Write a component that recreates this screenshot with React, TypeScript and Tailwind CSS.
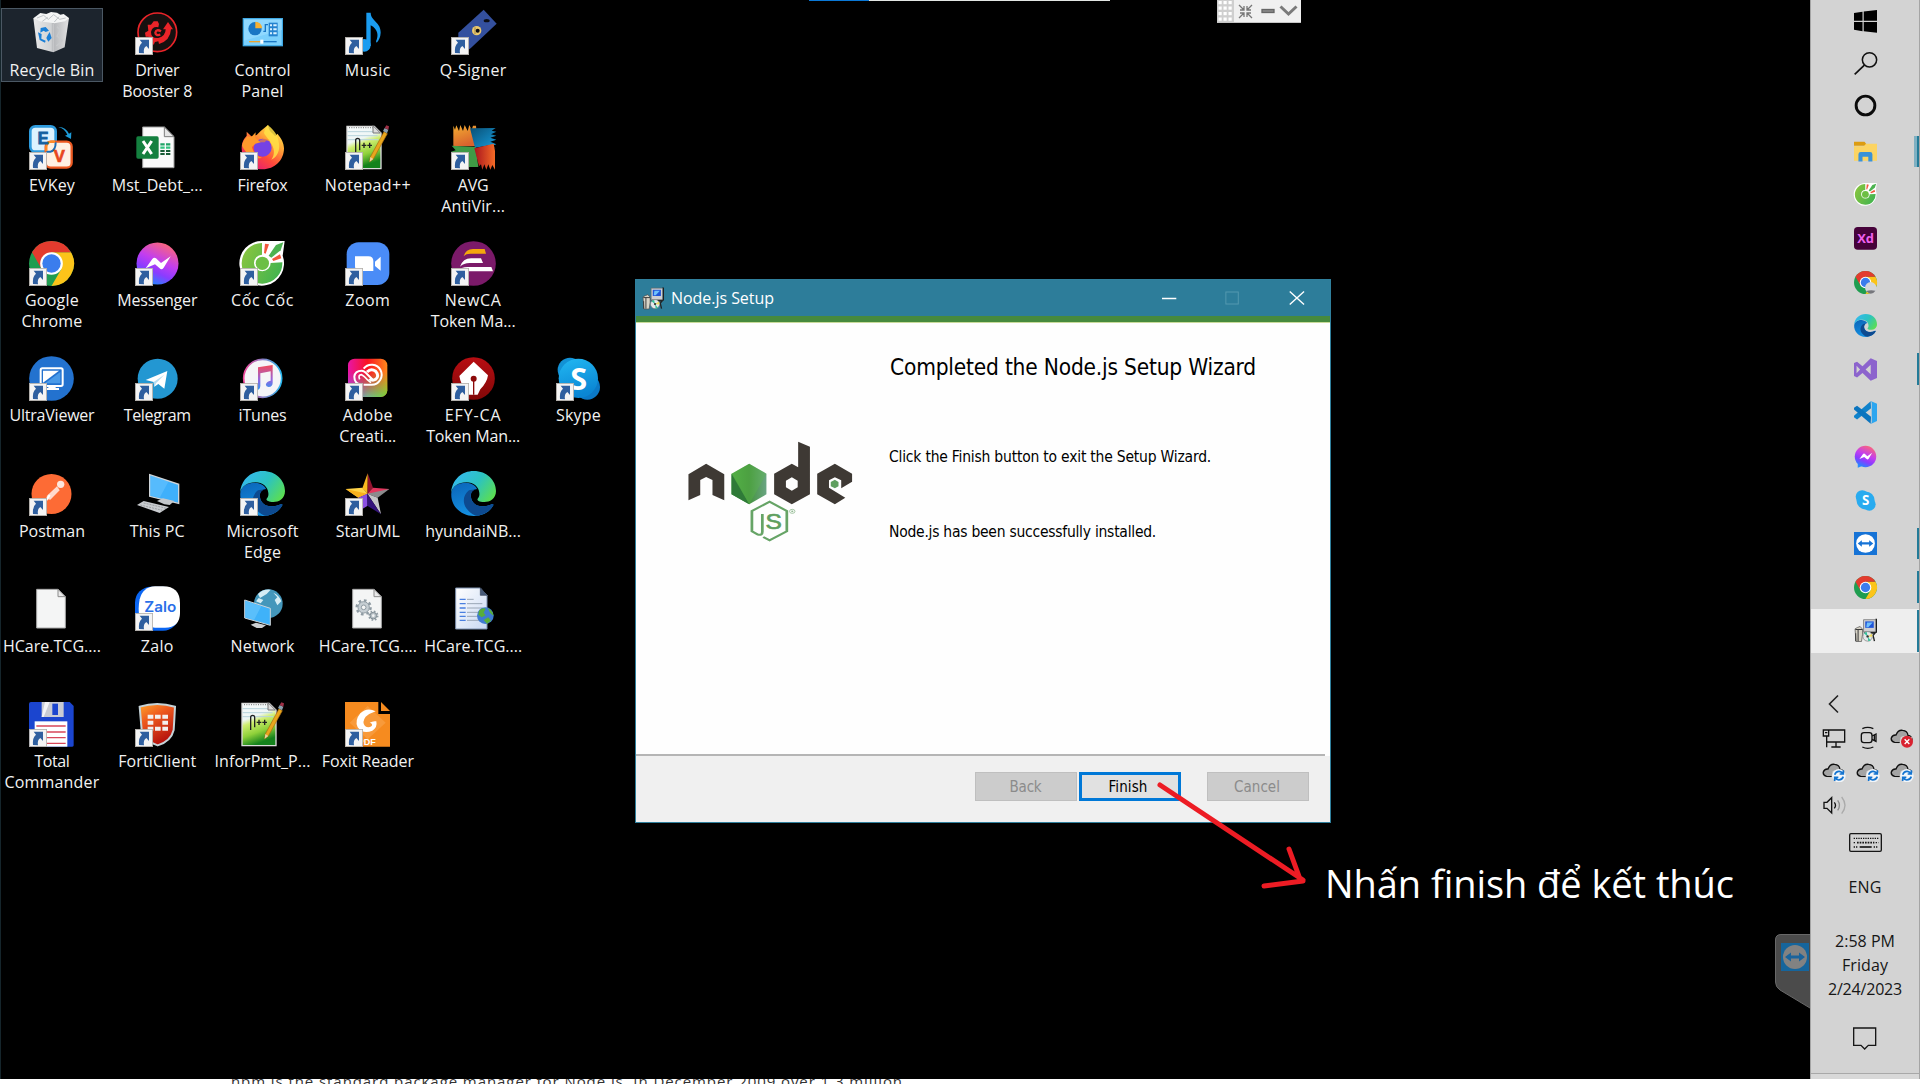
import { useLayoutEffect, useRef, useState, type ReactNode } from "react";

/* Text set to a given width by spreading or tightening its letters. */
function Fit({ w, children, className = "" }: { w: number; children: string; className?: string }) {
  const ref = useRef<HTMLSpanElement>(null);
  const [spacing, setSpacing] = useState(0);
  useLayoutEffect(() => {
    const el = ref.current;
    if (!el) return;
    const natural = el.getBoundingClientRect().width - spacing * children.length;
    setSpacing((w - natural) / children.length);
    // eslint-disable-next-line react-hooks/exhaustive-deps
  }, [w, children]);
  return (
    <span ref={ref} className={"inline-block whitespace-pre " + className} style={{ letterSpacing: spacing + "px" }}>
      {children}
    </span>
  );
}

function Svg({ children }: { children: ReactNode }) {
  return (
    <svg viewBox="0 0 135 135" className="block h-full w-full overflow-visible">
      {children}
    </svg>
  );
}

function Shortcut() {
  return (
    <svg viewBox="0 0 54 54" className="absolute bottom-0 left-0 h-[18px] w-[18px]">
      <rect x="1" y="1" width="52" height="52" fill="#f4f4f4" stroke="#b4b0ac" strokeWidth="3" />
      <path d="M12 48 Q10 25 21 17 L14 8 H42 V36 L34 27 Q24 33 27 49 Z" fill="#2f5f9f" />
    </svg>
  );
}

const RecycleBin = () => (
  <Svg>
    <defs>
      <linearGradient id="bin" x1="0" x2="1">
        <stop offset="0" stopColor="#e9e9e9" />
        <stop offset=".5" stopColor="#d0d2d4" />
        <stop offset=".55" stopColor="#b4b6b9" />
        <stop offset="1" stopColor="#e2e2e2" />
      </linearGradient>
    </defs>
    <path d="M13 24 L120 24 L107 112 L73 127 L24 114 Z" fill="url(#bin)" />
    <path d="M14 24 L34 9 L52 12 L66 6 L84 8 L94 14 L104 12 L120 24 L108 34 L76 40 L32 34 Z" fill="#f3f4f4" />
    <path d="M24 24 L44 16 L58 28 L74 14 L92 28 L110 24 M40 34 L56 22 M76 36 L90 20" fill="none" stroke="#bfc4c7" strokeWidth="3" />
    <path d="M73 42 V126" stroke="#c9cbcd" strokeWidth="3" />
    <path d="M84 50 L94 60 L84 78 L100 92 L82 108" fill="none" stroke="#c8cacc" strokeWidth="4" />
    <path d="M35 54 L50 51 L60 62 L50 66 L44 62 L34 68 Z M27 67 L38 72 L37 86 L50 92 L48 98 L32 90 Z M62 66 L68 84 L58 95 L52 84 L56 76 Z" fill="#1a7fd6" />
  </Svg>
);

const DriverBooster = () => (
  <Svg>
    <circle cx="67" cy="67" r="58" fill="#15100f" stroke="#ea2429" strokeWidth="5" />
    <path d="M38 44 L48 44 L56 34 H68 L72 42 L70 52 Q52 48 48 66 Q48 86 70 84 Q92 78 92 58 H84 L99 36 L114 58 H108 Q106 92 72 102 L70 94 L60 96 L56 104 L46 98 L48 88 L40 80 L32 80 L30 68 L40 62 Z" fill="#ea2429" />
    <path d="M78 64 Q64 56 61 68 Q62 78 76 74" fill="none" stroke="#ea2429" strokeWidth="7" />
  </Svg>
);

const ControlPanel = () => (
  <Svg>
    <rect x="10" y="26" width="117" height="81" fill="#7bd0fc" stroke="#3fa9e4" strokeWidth="4" />
    <path d="M12 28 H126 V60 L12 92Z" fill="#a3e0ff" opacity=".5" />
    <circle cx="45" cy="56" r="20" fill="#1976c4" />
    <path d="M46 55 V35 A20 20 0 0 1 66 55Z" fill="#f8b133" />
    <path d="M70 64 H76 V44 H84" fill="none" stroke="#1976c4" strokeWidth="4" />
    <rect x="86" y="38" width="27" height="41" fill="#2483cf" />
    <path d="M90 46 h6 M100 46 h10 M90 58 h6 M100 58 h10 M90 70 h6 M100 70 h10" stroke="#d8f1ff" strokeWidth="6" />
    <path d="M27 95 H60" stroke="#eba42c" strokeWidth="4" />
    <path d="M70 95 H110" stroke="#1976c4" strokeWidth="4" />
    <rect x="61" y="89" width="9" height="12" fill="#fff" />
  </Svg>
);

const Music = () => (
  <Svg>
    <ellipse cx="58" cy="106" rx="19" ry="19" fill="#1a9cf0" />
    <path d="M64 8 H77 C78 34 108 36 107 68 Q106 86 95 98 L93 94 C101 78 100 58 77 46 V108 H64Z" fill="#1a9cf0" />
  </Svg>
);

const QSigner = () => (
  <Svg>
    <path d="M98 -1 L137 41 L62 112 L55 118 L22 84 V68 Z" fill="#34509e" />
    <ellipse cx="107" cy="32" rx="9" ry="5" fill="#0c0d14" />
    <circle cx="77" cy="62" r="14" fill="#ecc96d" />
    <circle cx="80" cy="62" r="6" fill="#0c0d14" />
    <path d="M72 52 V72" stroke="#7a683a" strokeWidth="2" />
  </Svg>
);

const EVKey = () => (
  <Svg>
    <rect x="4" y="4" width="76" height="76" rx="15" fill="#dcf3ff" stroke="#2e9bdd" strokeWidth="8" />
    <path d="M88 6 Q106 10 115 29 L108 32 L126 42 L127 22 L120 26 Q108 4 88 6Z" fill="#1d9ad6" />
    <rect x="50" y="50" width="78" height="78" rx="15" fill="#fff0e2" stroke="#ee5a22" strokeWidth="7" />
    <path d="M52 80 H64 Q80 78 80 52" fill="none" stroke="#1d6db6" strokeWidth="6" />
    <path d="M52 78 V65 Q54 50 68 50 H78" fill="none" stroke="#ff8c26" strokeWidth="7" />
    <text x="26" y="58" fontFamily="Liberation Sans" fontWeight="700" fontSize="48" fill="#14619f" stroke="#14619f" strokeWidth="3">E</text>
    <text x="74" y="111" fontFamily="Liberation Sans" fontWeight="700" fontSize="50" fill="#e8461c" stroke="#e8461c" strokeWidth="2">V</text>
  </Svg>
);

const Excel = () => (
  <Svg>
    <path d="M23 6 H88 L117 35 V128 H23Z" fill="#fafafa" stroke="#9d9d9d" strokeWidth="3" />
    <path d="M88 6 V35 H117Z" fill="#e6e6e6" stroke="#7d7d7d" strokeWidth="3" />
    <path d="M76 58 h13 M93 58 h13" stroke="#21a366" strokeWidth="7" />
    <path d="M76 68 h13 M93 68 h13" stroke="#33c481" strokeWidth="7" />
    <path d="M76 78 h13 M93 78 h13 M76 87 h13 M93 87 h13" stroke="#185c37" strokeWidth="6" />
    <rect x="4" y="34" width="67" height="67" rx="5" fill="#14803f" />
    <path d="M24 48 L50 87 M50 48 L24 87" stroke="#fff" strokeWidth="9" />
  </Svg>
);

const Firefox = () => (
  <Svg>
    <defs>
      <linearGradient id="ff" x1=".9" y1="0" x2=".2" y2="1">
        <stop offset="0" stopColor="#fff44f" />
        <stop offset=".35" stopColor="#ffa436" />
        <stop offset=".65" stopColor="#ff4a3a" />
        <stop offset="1" stopColor="#e3147d" />
      </linearGradient>
    </defs>
    <path d="M84 0 C86 20 98 24 106 34 L112 26 C124 40 132 54 132 70 C132 106 104 133 68 133 C30 133 4 106 5 68 C6 48 12 42 20 32 L20 20 L34 34 L50 30 L62 18 Z" fill="url(#ff)" />
    <path d="M84 0 C92 8 114 26 116 50 C122 74 112 96 94 104 C104 92 104 74 96 60 C86 40 76 34 72 24 C74 12 80 6 84 0Z" fill="#ffe146" opacity=".85" />
    <circle cx="68" cy="68" r="27" fill="#7542e5" />
    <path d="M6 62 C10 44 16 42 22 34 L34 36 L47 22 L46 38 L62 52 L46 56 L36 66 C40 84 52 96 66 98 C40 104 22 92 6 62Z" fill="#ff9a2c" />
    <path d="M54 52 Q68 34 90 46 Q78 44 74 52 Z" fill="#ff8b1d" opacity=".6" />
  </Svg>
);

const Notepad = () => (
  <Svg>
    <defs>
      <linearGradient id="npp" x1="0" y1="0" x2=".3" y2="1">
        <stop offset="0" stopColor="#f8fbfc" />
        <stop offset=".38" stopColor="#eef6f5" />
        <stop offset=".5" stopColor="#cfee70" />
        <stop offset=".75" stopColor="#8fd13a" />
        <stop offset="1" stopColor="#14821c" />
      </linearGradient>
    </defs>
    <path d="M6 4 H88 L108 24 V131 H6Z" fill="url(#npp)" stroke="#dcdcdc" strokeWidth="4" />
    <path d="M12 8 H84" stroke="#8a8a8a" strokeWidth="4" strokeDasharray="3 4" />
    <path d="M8 20 H84 M8 32 H98 M8 44 H100" stroke="#b7d3dc" strokeWidth="3" />
    <path d="M84 2 V24 H106Z" fill="#dcdcdc" stroke="#777" strokeWidth="3" />
    <path d="M32 84 V46 Q32 40 38 40 Q44 40 44 46 V76" fill="none" stroke="#222" strokeWidth="4" />
    <path d="M50 61 h14 M57 53 v16 M67 61 h14 M74 53 v16" stroke="#222" strokeWidth="4" />
    <path d="M74 110 L76 96 L117 20 L127 26 L85 102Z" fill="#e9a61d" stroke="#a76b10" strokeWidth="2" />
    <path d="M114 18 L119 9 L130 14 L126 25Z" fill="#8ca0ad" />
    <path d="M119 9 L124 1 L132 4 L130 14Z" fill="#9d2f45" />
    <path d="M74 110 L76 96 L85 102Z" fill="#ebd09d" />
  </Svg>
);

const Avg = () => (
  <Svg>
    <defs>
      <linearGradient id="avgo" x1="0" y1="0" x2=".4" y2="1"><stop offset="0" stopColor="#f3ad30" /><stop offset="1" stopColor="#d9632e" /></linearGradient>
      <linearGradient id="avgb" x1="0" y1="0" x2="1" y2="1"><stop offset="0" stopColor="#0a4f75" /><stop offset="1" stopColor="#169ddc" /></linearGradient>
      <linearGradient id="avgr" x1="0" y1="0" x2="1" y2="0"><stop offset="0" stopColor="#a8131e" /><stop offset="1" stopColor="#f46a26" /></linearGradient>
    </defs>
    <path d="M7 2 L12 14 L16 1 L24 18 L28 0 L36 18 L41 0 L50 18 L55 0 L62 14 L66 2 L75 2 L76 14 L74 64 H7Z" fill="url(#avgo)" />
    <path d="M57 10 L134 9 L122 17 L136 20 L120 28 L136 32 L118 38 L136 44 L118 50 L136 58 L124 62 L136 72 L120 60 L72 68Z" fill="url(#avgb)" />
    <path d="M2 62 L74 66 L82 126 H54 L10 100 L0 96 L12 88 L0 80 L14 76Z" fill="#3f9a46" />
    <path d="M70 70 L128 56 L132 78 V134 L124 120 L118 134 L112 118 L106 134 L100 118 L94 134 L90 118 L84 124Z" fill="url(#avgr)" />
  </Svg>
);

const Chrome = () => (
  <Svg>
    <circle cx="67.500" cy="67.500" r="67.500" fill="#1f9d50" />
    <path d="M126 33.750 A67.500 67.500 0 0 1 67.500 135 L96.700 84.400 L67.500 33.750Z" fill="#fcc41a" />
    <path d="M67.500 33.750 H126 A67.500 67.500 0 0 0 9 33.750 L38.300 84.400Z" fill="#e33b2e" />
    <circle cx="67.500" cy="67.500" r="34" fill="#fff" />
    <circle cx="67.500" cy="67.500" r="27.500" fill="#3b7ded" />
  </Svg>
);

const Messenger = ({ tail = false }: { tail?: boolean }) => (
  <Svg>
    <defs>
      <linearGradient id="msg" x1=".75" y1="0" x2=".3" y2="1">
        <stop offset="0" stopColor="#ff6a72" />
        <stop offset=".45" stopColor="#c23df0" />
        <stop offset=".7" stopColor="#8a3cff" />
        <stop offset="1" stopColor="#1a8dff" />
      </linearGradient>
    </defs>
    {tail && <path d="M22 90 V134 L64 118Z" fill="#2b8cff" />}
    <circle cx="67.500" cy="67.500" r="63" fill="url(#msg)" />
    <path d="M32 82 L52 54 Q57 48 63 52 L78 66 L107 46 L86 80 Q80 88 74 82 L60 70 Z" fill="#fff" />
  </Svg>
);

const CocCoc = () => (
  <Svg>
    <defs>
      <linearGradient id="coc" x1="0" y1=".3" x2="1" y2=".8">
        <stop offset="0" stopColor="#86c440" />
        <stop offset="1" stopColor="#3fb34f" />
      </linearGradient>
    </defs>
    <path d="M67 0 H134 L128 44 A67 67 0 1 1 67 0Z" fill="#fff" />
    <path d="M66 6 A61 61 0 1 0 127 64 L92 66 A25 25 0 1 1 66 41Z" fill="url(#coc)" />
    <circle cx="67" cy="67" r="20" fill="#6cbf44" />
    <path d="M75 8 L87 10 L77 38 L72 36Z M96 54 L120 40 L124 52 L100 60Z" fill="#f2593c" />
    <path d="M86 44 L108 12 L130 4 L122 28 L94 50Z" fill="#4cb350" />
  </Svg>
);

const Zoom = () => (
  <Svg>
    <rect x="5" y="4" width="128" height="128" rx="36" fill="#4a8cf7" />
    <path d="M30 46 H70 Q85 46 85 60 V90 H44 Q30 90 30 76Z M90 62 L107 47 V89 L90 75Z" fill="#fff" />
  </Svg>
);

const NewCA = () => (
  <Svg>
    <circle cx="67.500" cy="67.500" r="67" fill="#7b1a69" />
    <path d="M38 46 Q44 24 66 24 H101 L105 38 H58 Q44 38 38 46Z" fill="#f4a70d" />
    <path d="M27 77 Q36 52 60 52 H90 L96 66 H56 Q38 66 27 77Z M20 91 Q30 78 50 78 H121 L126 91Z" fill="#fff" />
  </Svg>
);

const UltraViewer = () => (
  <Svg>
    <circle cx="67.500" cy="67.500" r="67" fill="#2372cf" />
    <rect x="35" y="37" width="66" height="53" rx="5" fill="none" stroke="#fff" strokeWidth="6" />
    <path d="M42 44 H90 L42 80Z" fill="#fff" />
    <path d="M94 48 V82 H48Z" fill="#4a9ae8" />
    <path d="M58 92 H80 V96 H90 V102 H48 V96 H58Z" fill="#fff" />
  </Svg>
);

const Telegram = () => (
  <Svg>
    <circle cx="68" cy="68" r="60" fill="#2397d2" />
    <path d="M32 72 L97 45 L88 98 L70 84 L58 92 L56 78Z" fill="#fff" />
    <path d="M56 78 L88 56 L63 82 L58 92Z" fill="#b5dcf0" />
  </Svg>
);

const ITunes = () => (
  <Svg>
    <defs>
      <linearGradient id="itr" x1="0" x2="1"><stop offset="0" stopColor="#f1489b" /><stop offset="1" stopColor="#27b7ee" /></linearGradient>
      <linearGradient id="itn" x1="0" y1="0" x2="0" y2="1"><stop offset="0" stopColor="#f34a58" /><stop offset=".6" stopColor="#9266e0" /><stop offset="1" stopColor="#2a9af0" /></linearGradient>
    </defs>
    <circle cx="68" cy="67" r="57" fill="#f5f5f7" stroke="url(#itr)" strokeWidth="5" />
    <path d="M54 34 L98 27 V80 Q98 92 86 93 Q76 92 78 84 Q80 76 92 74 V46 L61 52 V90 Q60 102 50 102 Q40 100 42 91 Q44 82 54 81Z" fill="url(#itn)" />
  </Svg>
);

const CreativeCloud = () => (
  <Svg>
    <defs>
      <linearGradient id="cc1" x1="0" x2="1"><stop offset="0" stopColor="#e815a8" /><stop offset=".5" stopColor="#fa1420" /><stop offset="1" stopColor="#ff8a1c" /></linearGradient>
      <linearGradient id="cc2" x1="0" x2="1"><stop offset="0" stopColor="#8a5cf0" /><stop offset=".5" stopColor="#62cfa0" /><stop offset="1" stopColor="#5ee03c" /></linearGradient>
      <linearGradient id="ccm" x1="0" y1="0" x2="0" y2="1"><stop offset=".35" stopColor="#000" /><stop offset="1" stopColor="#fff" /></linearGradient>
      <mask id="ccmask"><rect width="135" height="135" fill="url(#ccm)" /></mask>
    </defs>
    <rect x="9" y="8" width="118" height="115" rx="20" fill="url(#cc1)" />
    <rect x="9" y="8" width="118" height="115" rx="20" fill="url(#cc2)" mask="url(#ccmask)" />
    <path d="M50 86 Q28 84 28 62 Q30 44 50 44 Q58 44 66 54 L84 72 M56 86 H80 A30 30 0 1 0 56 38" fill="none" stroke="#fff" strokeWidth="6" />
    <path d="M66 48 Q78 36 92 46 Q104 60 92 70 Q82 76 74 68" fill="none" stroke="#fff" strokeWidth="9" />
    <path d="M44 70 Q38 56 50 56 Q58 60 66 70 L78 80" fill="none" stroke="#fff" strokeWidth="5" />
  </Svg>
);

const Efy = () => (
  <Svg>
    <defs><linearGradient id="efy" x1="0" y1="0" x2="0" y2="1"><stop offset="0" stopColor="#b80d12" /><stop offset="1" stopColor="#820808" /></linearGradient></defs>
    <circle cx="67.500" cy="67.500" r="64" fill="url(#efy)" />
    <path d="M68 17 L111 58 Q108 80 88 100 L80 116 H48 Q28 80 25 60Z" fill="#fff" />
    <circle cx="68" cy="68" r="9" fill="#8c0a0a" />
    <path d="M68 72 V116" stroke="#8c0a0a" strokeWidth="4" />
  </Svg>
);

const Skype = () => (
  <Svg>
    <defs><linearGradient id="sky" x1="0" y1="0" x2=".3" y2="1"><stop offset="0" stopColor="#22b8f2" /><stop offset="1" stopColor="#0a86d4" /></linearGradient></defs>
    <circle cx="42" cy="42" r="37" fill="#1291d5" />
    <circle cx="94" cy="93" r="38" fill="#0b79c7" />
    <circle cx="67" cy="67" r="59" fill="url(#sky)" />
    <text x="68" y="101" textAnchor="middle" fontFamily="Open Sans" fontWeight="700" fontSize="92" fill="#fff">S</text>
  </Svg>
);

const Postman = () => (
  <Svg>
    <circle cx="67.500" cy="69" r="60" fill="#fd6b35" />
    <path d="M84 46 L54 74 L52 84 L64 86 L92 58 Z" fill="#ffd9cc" />
    <circle cx="95" cy="40" r="11" fill="#fde6de" />
    <path d="M62 72 L52 88" stroke="#fff" strokeWidth="6" />
  </Svg>
);

const ThisPC = () => (
  <Svg>
    <path d="M44 11 L131 40 V97 L44 76Z" fill="#3fb0fb" stroke="#cfd4d8" strokeWidth="4" />
    <path d="M46 13 L100 32 L74 80 L46 73Z" fill="#74c9ff" opacity=".45" />
    <path d="M66 90 L84 82 L118 90 L104 102 L88 100Z" fill="#c4c8cc" />
    <path d="M6 102 L26 90 L102 108 L74 126Z" fill="#c9ccd0" />
    <path d="M16 102 L82 118 M26 96 L94 112" stroke="#85898d" strokeWidth="2" strokeDasharray="6 3" />
  </Svg>
);

const Edge = () => (
  <Svg>
    <defs>
      <linearGradient id="edgeTop" x1="0" y1=".3" x2="1" y2=".8"><stop offset="0" stopColor="#35b9ee" /><stop offset=".5" stopColor="#2cc3c0" /><stop offset="1" stopColor="#5fe04a" /></linearGradient>
      <linearGradient id="edgeLeft" x1="0" y1="0" x2=".4" y2="1"><stop offset="0" stopColor="#0a64b8" /><stop offset="1" stopColor="#1591e2" /></linearGradient>
    </defs>
    <path d="M1 66 C4 44 24 34 46 35 C64 36 76 46 78 54 C62 54 56 70 62 86 C70 106 96 112 124 99 Q128 99 127 103 C116 124 94 135 68 135 C30 135 -2 104 1 66Z" fill="url(#edgeLeft)" />
    <path d="M54 58 C36 72 34 94 46 112 C56 126 70 135 80 134 C102 130 118 120 127 103 Q128 99 124 99 C96 112 70 106 62 88 C56 72 60 58 78 54 Z" fill="#0d4a90" />
    <path d="M0 66 C3 25 33 0 68 0 C108 0 135 28 135 60 C135 84 116 93 100 93 C84 93 77 87 80 83 C84 78 86 74 85 66 C84 48 68 34 46 34 C24 34 4 46 0 66Z" fill="url(#edgeTop)" />
  </Svg>
);

const StarUML = () => (
  <Svg>
    <path d="M68 7 L84 50 L67 68Z" fill="#93132f" />
    <path d="M68 7 L52 52 L67 68Z" fill="#f8b91f" />
    <path d="M133 54 L84 50 L67 68 L92 74Z" fill="#e3365d" />
    <path d="M2 54 L52 50 L67 68 L40 80Z" fill="#ffd348" />
    <path d="M2 54 L40 80 L67 68Z" fill="#f8b01c" />
    <path d="M133 54 L98 80 L67 68Z" fill="#8b8b8d" />
    <path d="M98 80 L108 130 L67 68Z" fill="#c6c6c8" />
    <path d="M67 68 L40 80 L26 130 L68 104Z" fill="#8a4fe0" />
    <path d="M67 68 V104 L108 130Z" fill="#34137a" />
  </Svg>
);

const BlankFile = ({ children }: { children?: ReactNode }) => (
  <Svg>
    <path d="M23 10 H87 L109 32 V126 H23Z" fill="#f4f5f5" stroke="#a9a9a9" strokeWidth="3" />
    <path d="M87 10 V32 H109Z" fill="#e9e9e9" stroke="#8b8b8b" strokeWidth="3" />
    {children}
  </Svg>
);

const ConfigFile = () => (
  <BlankFile>
    <circle cx="56" cy="64" r="17" fill="#c6ced3" stroke="#8f9ba3" strokeWidth="3" />
    <circle cx="56" cy="64" r="21" fill="none" stroke="#8f9ba3" strokeWidth="7" strokeDasharray="8 8.500" />
    <circle cx="56" cy="64" r="7" fill="#f4f5f5" stroke="#8f9ba3" strokeWidth="3" />
    <circle cx="85" cy="89" r="10" fill="#b6bfc5" stroke="#7f8b92" strokeWidth="3" />
    <circle cx="85" cy="89" r="13" fill="none" stroke="#8f9ba3" strokeWidth="5" strokeDasharray="5 5.200" />
    <circle cx="85" cy="89" r="4" fill="#f4f5f5" />
  </BlankFile>
);

const WebFile = () => (
  <Svg>
    <defs><linearGradient id="wf" x1="0" y1="0" x2="1" y2="1"><stop offset="0" stopColor="#fff" /><stop offset="1" stopColor="#c8d8f2" /></linearGradient></defs>
    <path d="M14 6 H88 L108 28 V129 H14Z" fill="url(#wf)" stroke="#7d90ae" strokeWidth="3" />
    <path d="M88 6 V28 H108Z" fill="#475a78" stroke="#33425a" strokeWidth="2" />
    <path d="M26 40 h18 M26 53 h18 M26 66 h18 M26 79 h18 M26 91 h18 M26 103 h18" stroke="#4a7fe0" strokeWidth="4" />
    <path d="M48 40 h20 M48 53 h46 M48 66 h46 M48 79 h36 M48 91 h32 M48 103 h36" stroke="#9aa6b6" strokeWidth="3" />
    <circle cx="103" cy="89" r="25" fill="#3f7bd0" />
    <path d="M84 74 Q94 64 104 68 L98 80 L104 88 L92 94 L82 86Z M110 66 Q126 74 128 90 L118 82Z M98 102 L112 94 L120 104 L108 113Z" fill="#58ae3a" />
  </Svg>
);

const Zalo = () => (
  <Svg>
    <rect x="0" y="2" width="132" height="132" rx="48" fill="#0b66f2" />
    <path d="M60 1 H84 Q135 1 135 52 V80 Q135 124 90 125 H60 Q24 122 14 96 Q8 70 14 40 Q24 2 60 1Z" fill="#fff" />
    <text x="28" y="79" fontFamily="Inter" fontWeight="600" fontSize="44" textLength="96" lengthAdjust="spacingAndGlyphs" fill="#2a6fe8">Zalo</text>
  </Svg>
);

const Network = () => (
  <Svg>
    <circle cx="85" cy="53" r="43" fill="#4497bb" />
    <path d="M54 24 Q70 8 92 11 L80 24 L60 36Z M100 20 Q118 28 124 46 L112 58 L104 42 L112 34Z M56 36 L70 42 L62 52 L48 46Z" fill="#d5edf4" />
    <path d="M14 42 L91 67 V118 L14 96Z" fill="#3fb2f9" stroke="#cdd4d8" strokeWidth="3" />
    <path d="M16 45 L64 60 L42 102 L16 94Z" fill="#85d2ff" opacity=".4" />
    <path d="M32 116 L48 110 L78 118 L66 126 H50Z" fill="#cdd0d3" />
  </Svg>
);

const TotalCommander = () => (
  <Svg>
    <path d="M6 0 H122 L134 12 V130 Q134 134 130 134 H6 Q0 134 0 128 V6 Q0 0 6 0Z" fill="#1b45cf" />
    <rect x="38" y="0" width="66" height="45" fill="#c9cbd3" />
    <rect x="70" y="5" width="17" height="34" fill="#1b45cf" />
    <path d="M48 0 H62 L44 45 H38Z" fill="#f4f4f6" />
    <rect x="17" y="58" width="98" height="76" fill="#fff" />
    <path d="M22 72 H110 M22 90 H110 M22 107 H110 M22 124 H110" stroke="#d8475a" strokeWidth="4" />
  </Svg>
);

const FortiClient = () => (
  <Svg>
    <defs><linearGradient id="forti" x1="0" y1="0" x2=".5" y2="1"><stop offset="0" stopColor="#ffa32b" /><stop offset=".4" stopColor="#ee5a1e" /><stop offset="1" stopColor="#b5120d" /></linearGradient></defs>
    <path d="M14 14 Q66 -2 120 14 Q118 54 116 84 Q108 118 68 130 Q30 118 20 84Z" fill="url(#forti)" stroke="#c5d3d8" strokeWidth="6" />
    <path d="M38 38 h17 v12 h-17z M60 38 h17 v12 h-17z M82 38 h17 v12 h-17z M38 56 h17 v12 h-17z M82 56 h17 v12 h-17z M38 74 h17 v12 h-17z M60 74 h17 v12 h-17z M82 74 h17 v12 h-17z" fill="#f3efee" />
  </Svg>
);

const Foxit = () => (
  <Svg>
    <path d="M0 0 H100 V36 H135 V134 H0Z" fill="#f68b1f" />
    <path d="M108 0 L135 27 H108Z" fill="#f68b1f" />
    <path d="M68 12 L122 62 L68 112 L14 62Z" fill="#fbae5c" opacity=".45" />
    <path d="M92 28 Q66 14 46 34 Q28 56 38 76 Q54 98 82 86 Q98 76 94 58 Q84 56 74 62 Q84 64 80 72 Q70 80 60 72 Q50 60 62 44 Q74 34 92 28Z" fill="#fff" />
    <text x="38" y="128" fontFamily="Liberation Sans" fontWeight="700" fontSize="27" fill="#fff">PDF</text>
  </Svg>
);

type Item = { icon: ReactNode; lines: [string, number][]; link?: boolean; selected?: boolean } | null;

const HCARE: [string, number] = ["HCare.TCG....", 98];

const items: Item[] = [
  { icon: <RecycleBin />, lines: [["Recycle Bin", 85]], selected: true },
  { icon: <DriverBooster />, lines: [["Driver", 44], ["Booster 8", 70]], link: true },
  { icon: <ControlPanel />, lines: [["Control", 56], ["Panel", 42]] },
  { icon: <Music />, lines: [["Music", 46]], link: true },
  { icon: <QSigner />, lines: [["Q-Signer", 67]], link: true },
  null,
  { icon: <EVKey />, lines: [["EVKey", 46]], link: true },
  { icon: <Excel />, lines: [["Mst_Debt_...", 91]] },
  { icon: <Firefox />, lines: [["Firefox", 50]], link: true },
  { icon: <Notepad />, lines: [["Notepad++", 86]], link: true },
  { icon: <Avg />, lines: [["AVG", 31], ["AntiVir...", 64]], link: true },
  null,
  { icon: <Chrome />, lines: [["Google", 54], ["Chrome", 61]], link: true },
  { icon: <Messenger />, lines: [["Messenger", 80]], link: true },
  { icon: <CocCoc />, lines: [["Cốc Cốc", 63]], link: true },
  { icon: <Zoom />, lines: [["Zoom", 45]], link: true },
  { icon: <NewCA />, lines: [["NewCA", 57], ["Token Ma...", 85]], link: true },
  null,
  { icon: <UltraViewer />, lines: [["UltraViewer", 85]], link: true },
  { icon: <Telegram />, lines: [["Telegram", 67]], link: true },
  { icon: <ITunes />, lines: [["iTunes", 48]], link: true },
  { icon: <CreativeCloud />, lines: [["Adobe", 50], ["Creati...", 57]], link: true },
  { icon: <Efy />, lines: [["EFY-CA", 57], ["Token Man...", 94]], link: true },
  { icon: <Skype />, lines: [["Skype", 45]], link: true },
  { icon: <Postman />, lines: [["Postman", 66]], link: true },
  { icon: <ThisPC />, lines: [["This PC", 55]] },
  { icon: <Edge />, lines: [["Microsoft", 72], ["Edge", 37]], link: true },
  { icon: <StarUML />, lines: [["StarUML", 64]], link: true },
  { icon: <Edge />, lines: [["hyundaiNB...", 96]] },
  null,
  { icon: <BlankFile />, lines: [HCARE] },
  { icon: <Zalo />, lines: [["Zalo", 33]], link: true },
  { icon: <Network />, lines: [["Network", 64]] },
  { icon: <ConfigFile />, lines: [HCARE] },
  { icon: <WebFile />, lines: [HCARE] },
  null,
  { icon: <TotalCommander />, lines: [["Total", 35], ["Commander", 95]], link: true },
  { icon: <FortiClient />, lines: [["FortiClient", 78]], link: true },
  { icon: <Notepad />, lines: [["InforPmt_P...", 96]] },
  { icon: <Foxit />, lines: [["Foxit Reader", 92]], link: true },
];

function DesktopIcon({ item }: { item: Item }) {
  if (!item) return <div />;
  return (
    <div className="relative flex flex-col items-center">
      {item.selected && <div className="absolute top-[-2px] left-[2px] h-[74px] w-[102px] border border-[#4b5864] bg-[#1c242d]" />}
      <div className="relative h-[45px] w-[45px]">
        {item.icon}
        {item.link && <Shortcut />}
      </div>
      <div className="relative mt-[4.600px] flex flex-col items-center text-[16px] leading-[21px] text-[#f2f2f2]">
        {item.lines.map(([t, w]) => (
          <Fit key={t} w={w}>{t}</Fit>
        ))}
      </div>
    </div>
  );
}

const Installer = () => (
  <Svg>
    <path d="M56 4 H126 V78 H56Z" fill="#cfcfd2" stroke="#666" strokeWidth="4" />
    <path d="M126 2 H132 V78 H60" fill="none" stroke="#1c1c1c" strokeWidth="6" />
    <path d="M66 14 H116 V52 H66Z" fill="#1f55d8" />
    <path d="M76 20 H110 L84 48 H72Z" fill="#6fc0fc" />
    <path d="M6 58 L20 50 L36 44 L50 60 V90 L44 132 H12Z" fill="#d9d5c8" stroke="#4a4a4a" strokeWidth="4" />
    <path d="M24 62 V130 M8 62 H50 M10 84 V130" stroke="#3a3a3a" strokeWidth="6" />
    <path d="M98 82 H124 L112 96 L120 130" stroke="#222" strokeWidth="8" fill="none" />
    <circle cx="80" cy="102" r="28" fill="#e4e8ea" stroke="#777" strokeWidth="4" />
    <path d="M80 102 L58 84 L74 75Z M80 102 L98 126 L84 130Z" fill="#35c29b" />
    <path d="M80 102 L104 86 L108 104Z" fill="#f0dc5c" />
    <circle cx="80" cy="102" r="7" fill="#333" />
  </Svg>
);

const TeamViewer = () => (
  <Svg>
    <rect width="135" height="135" fill="#1673d6" />
    <circle cx="67.500" cy="67.500" r="55" fill="#fff" />
    <path d="M22 67 L46 48 V60 H89 V48 L113 67 L89 86 V74 H46 V86Z" fill="#1673d6" />
  </Svg>
);

const WindowsLogo = () => (
  <Svg>
    <path d="M0 18 L50 10 V63 H0Z M57 9 L135 0 V63 H57Z M0 70 H50 V124 L0 116Z M57 70 H135 V134 L57 125Z" fill="#000" />
  </Svg>
);
const Search = () => (
  <Svg><circle cx="91" cy="46" r="42" fill="none" stroke="#111" strokeWidth="9" /><path d="M61 77 L4 131" stroke="#111" strokeWidth="10" /></Svg>
);
const Cortana = () => <Svg><circle cx="67.500" cy="67.500" r="55" fill="none" stroke="#0b0b0b" strokeWidth="17" /></Svg>;
const Folder = () => (
  <Svg>
    <path d="M0 10 H62 L72 24 V34 H0Z" fill="#dd9c10" />
    <path d="M0 36 H58 L70 22 H135 V122 H0Z" fill="#fcd462" />
    <path d="M26 126 V84 Q26 70 40 70 H94 Q108 70 108 84 V126 H84 V98 H50 V126Z" fill="#3a92d8" />
  </Svg>
);
const Xd = () => (
  <Svg>
    <rect width="135" height="133" rx="22" fill="#46023a" />
    <text x="68" y="93" textAnchor="middle" fontFamily="Open Sans" fontWeight="700" fontSize="76" fill="#f061ee">Xd</text>
  </Svg>
);
const ChromeUser = () => (
  <Svg>
    <Chrome />
    <circle cx="98" cy="98" r="33" fill="#d5d7dc" />
    <path d="M72 118 Q98 108 126 116 Q116 132 98 133 Q82 132 72 118Z" fill="#76777c" />
  </Svg>
);
const VisualStudio = () => (
  <Svg>
    <path fillRule="evenodd" d="M98 2 L135 18 V117 L98 133 L50 88 L18 114 L0 106 V30 L18 22 L50 48 Z M98 40 L68 67 L98 96Z M15 46 V90 L36 68Z" fill="#8c63cd" />
  </Svg>
);
const VsCode = () => (
  <Svg>
    <path d="M98 2 L100 42 L18 108 L0 96 V86 L98 2Z" fill="#0f82cb" />
    <path d="M98 133 L100 93 L18 28 L0 40 V50 L98 133Z" fill="#0b74be" />
    <path d="M98 0 L135 16 V118 L98 135 Q104 130 104 122 V14 Q104 6 98 0Z" fill="#2ca6f0" />
  </Svg>
);
const SkypeSmall = () => (
  <Svg>
    <circle cx="48" cy="45" r="38" fill="#29abef" />
    <circle cx="90" cy="90" r="37" fill="#29abef" />
    <circle cx="68" cy="67" r="53" fill="#29abef" />
    <text x="68" y="95" textAnchor="middle" fontFamily="Open Sans" fontWeight="700" fontSize="78" fill="#fff">S</text>
  </Svg>
);

const apps: { icon: ReactNode; open?: boolean; active?: boolean; stacked?: boolean }[] = [
  { icon: <Folder />, open: true, stacked: true },
  { icon: <CocCoc /> },
  { icon: <Xd /> },
  { icon: <ChromeUser /> },
  { icon: <Edge /> },
  { icon: <VisualStudio />, open: true },
  { icon: <VsCode /> },
  { icon: <Messenger tail /> },
  { icon: <SkypeSmall /> },
  { icon: <TeamViewer />, open: true },
  { icon: <Chrome />, open: true },
  { icon: <Installer />, open: true, active: true },
];

const Cloud = ({ error = false }: { error?: boolean }) => (
  <svg viewBox="0 0 72 60" className="h-5 w-6">
    <path d="M14 43 Q2 40 4 30 Q7 20 18 21 Q24 5 38 7 Q52 8 54 22 Q66 24 66 36 L60 44Z" fill="#a4a4a4" stroke="#111" strokeWidth="4" />
    <path d="M32 28 Q42 20 66 28 V50 H28Z" fill="#d9d9d9" />
    {error ? (
      <>
        <circle cx="51" cy="41" r="18" fill="#d9222f" />
        <path d="M44 34 L58 48 M58 34 L44 48" stroke="#fff" strokeWidth="4" />
      </>
    ) : (
      <>
        <circle cx="51" cy="41" r="20" fill="#f2f6fa" />
        <path d="M38 38 Q42 27 52 28 Q58 29 62 34 M64 25 V36 H53 M64 44 Q60 54 50 54 Q43 53 40 48 M38 57 V46 H49" fill="none" stroke="#1474d0" strokeWidth="5" />
      </>
    )}
  </svg>
);

const Tray = () => (
  <div className="ml-[11px] grid grid-cols-[34px_34px_34px] grid-rows-[34px_34px_34px_32px] items-center pt-[34.500px]">
    <svg viewBox="0 0 24 24" className="col-span-3 h-6 w-6"><path d="M16 3.500 L7.500 12 L16 20.500" fill="none" stroke="#222" strokeWidth="1.600" /></svg>
    <svg viewBox="0 0 72 60" className="h-5 w-6" fill="none" stroke="#111" strokeWidth="4">
      <path d="M20 6 H68 V42 H14 M42 42 V56 M28 57 H56 M14 24 V58 M4 6 H20 V24 H4Z M9 14 H16" />
    </svg>
    <svg viewBox="0 0 72 72" className="h-6 w-6" fill="none" stroke="#111" strokeWidth="4">
      <rect x="16" y="20" width="32" height="30" rx="8" />
      <path d="M48 30 L60 24 V46 L48 40 M55 26 V44 M19 8 Q35 0 52 8 M19 63 Q35 71 52 63" />
    </svg>
    <Cloud error />
    <Cloud />
    <Cloud />
    <Cloud />
    <svg viewBox="0 0 72 60" className="ml-px h-5 w-6" fill="none" stroke="#111" strokeWidth="4">
      <path d="M3 22 H12 L26 8 V54 L12 40 H3Z" />
      <path d="M34 22 Q41 31 34 40" />
      <path d="M44 16 Q55 31 44 46" stroke="#8a8a8a" />
      <path d="M56 6 Q76 31 56 56" stroke="#aaa" />
    </svg>
  </div>
);

const Taskbar = () => (
  <div className="flex h-[1079px] w-[110px] flex-col border-x border-[#a5a5a5] bg-[#d3d3d3] text-[#161616]">
    {[<WindowsLogo key="w" />, <Search key="s" />, <Cortana key="c" />].map((icon, i) => (
      <div key={i} className="flex h-[42px] items-center justify-center">
        <div className="h-[23px] w-[23px]">{icon}</div>
      </div>
    ))}
    <div className="mt-[3.500px]">
      {apps.map((a, i) => (
        <div key={i} className={"relative flex h-[43.6px] items-center justify-center " + (a.active ? "bg-[#eeeeee]" : "")}>
          <div className="h-[23px] w-[23px]">{a.icon}</div>
          {a.open && <div className={"absolute right-0 w-[2px] bg-[#237b98] " + (a.active ? "inset-y-[1px]" : "inset-y-[6px]")} />}
          {a.stacked && <div className="absolute inset-y-[6px] right-[2px] w-[3px] bg-[#7fb0c2]" />}
        </div>
      ))}
    </div>
    <Tray />
    <svg viewBox="0 0 99 57" className="mx-auto mt-[11.500px] h-[19px] w-[33px]" fill="none" stroke="#161616">
      <rect x="2" y="2" width="95" height="53" rx="4" strokeWidth="4" />
      <path d="M14 16 H88 M14 29 H20 M80 29 H88 M14 42 H26 M74 42 H88" strokeWidth="4" strokeDasharray="4 3" />
      <path d="M24 29 H76" strokeWidth="5" strokeDasharray="5 3" />
      <path d="M32 42 H68" strokeWidth="5" />
    </svg>
    <div className="mt-[23px] text-center text-[16px] leading-[24px]"><Fit w={33}>ENG</Fit></div>
    <div className="mt-[30px] flex flex-col items-center text-[16px] leading-[24px]">
      <Fit w={60}>2:58 PM</Fit>
      <Fit w={46}>Friday</Fit>
      <Fit w={74}>2/24/2023</Fit>
    </div>
    <svg viewBox="0 0 72 72" className="mx-auto mt-[25px] h-6 w-6"><path d="M2 6 H68 V58 H46 L35 69 L24 58 H2Z" fill="none" stroke="#161616" strokeWidth="4" /></svg>
    <div className="mt-auto h-[6px] border-t border-[#a8a8a8] bg-[#d8d8d8]" />
  </div>
);

const NodeLogo = () => (
  <svg viewBox="128 512 364 303" preserveAspectRatio="none" className="h-[101px] w-[165px]">
    <defs>
      <linearGradient id="nodeg" x1="0" y1="0" x2="1" y2="0"><stop offset="0" stopColor="#4faa45" /><stop offset=".5" stopColor="#45933f" /><stop offset="1" stopColor="#6aa583" /></linearGradient>
    </defs>
    <path d="M129 690 V612 L168 580 L208 612 V690 L182 674 V629 L168 620 L155 629 V674Z" fill="#3e3934" />
    <path d="M263 580 L301 610 V672 L263 702 L224 672 V610Z" fill="url(#nodeg)" />
    <path d="M224 610 L263 702 L224 672Z" fill="#2f7a38" />
    <path d="M263 580 L301 610 L263 702 L226 610Z" fill="#5cb947" opacity=".35" />
    <path fillRule="evenodd" d="M371 514 L397 529 V672 L357 702 L318 672 V610 L357 580 L371 591Z M357 621 L370 631 V651 L357 661 L344 651 V631Z" fill="#3e3934" />
    <path d="M452 580 L490 610 V634 L466 654 V630 L452 621 L439 630 V652 L475 682 L452 702 L413 672 V610Z" fill="#3e3934" />
    <path d="M452 628 L460 635 V648 L452 654 L443 648 V635Z" fill="#5f9f5f" />
    <path d="M294 800 L308 810 L346 783 V722 L308 694 L269 722 V783 L282 793 Q292 796 292 784 V731" fill="none" stroke="#66a466" strokeWidth="6" />
    <text x="299" y="776" fontFamily="Liberation Sans" fontWeight="400" fontSize="64" textLength="36" lengthAdjust="spacingAndGlyphs" fill="#5f9f5f" stroke="#5f9f5f" strokeWidth="2">S</text>
    <circle cx="358" cy="723" r="6" fill="none" stroke="#8fb98f" strokeWidth="2" />
    <circle cx="358" cy="723" r="2.500" fill="#8fb98f" />
  </svg>
);

const SetupWindow = () => (
  <div className="flex h-[544px] w-[696px] flex-col border border-[#2f7f9c] bg-[#fefefe] [font-family:'DejaVu_Sans_Condensed','DejaVu_Sans',sans-serif] text-black">
    <div className="flex h-[36px] items-center bg-[#2d7d9a] pl-1.5 text-white [font-family:'Open_Sans',sans-serif]">
      <div className="h-[23px] w-[22px]"><Installer /></div>
      <Fit w={103} className="ml-[7px] text-[16px]">Node.js Setup</Fit>
      <svg viewBox="0 0 150 16" className="ml-auto mr-[25px] h-4 w-[143px]" preserveAspectRatio="none" fill="none">
        <path d="M0 8.500 H15" stroke="#fff" strokeWidth="1.500" />
        <rect x="67" y="2" width="13" height="12" stroke="#5599b0" />
        <path d="M134 1.500 L149 14.500 M149 1.500 L134 14.500" stroke="#fff" strokeWidth="1.500" />
      </svg>
    </div>
    <div className="h-[7px] border-b border-[#c9db9a] bg-[#468a3e]" />
    <div className="flex h-[431px]">
      <div className="w-[253px] pt-[118px] pl-[52px]"><NodeLogo /></div>
      <div className="flex flex-col items-start pt-[29px]">
        <Fit w={366} className="ml-px text-[22.500px] leading-[30px]">Completed the Node.js Setup Wizard</Fit>
        <Fit w={322} className="mt-[63px] text-[15.500px] leading-[24px]">Click the Finish button to exit the Setup Wizard.</Fit>
        <Fit w={267} className="mt-[51px] text-[15.500px] leading-[24px]">Node.js has been successfully installed.</Fit>
      </div>
    </div>
    <div className="mr-[5px] h-[2px] bg-[#b5b5b5]" />
    <div className="flex flex-1 items-start bg-[#f0f0f0] pt-[16px] pl-[339px] text-[15px]">
      <div className="flex h-[29px] w-[102px] items-center justify-center border border-[#bfbfbf] bg-[#cccccc] pt-0.5 pr-px text-[#8b8b8b]"><Fit w={32}>Back</Fit></div>
      <div className="ml-[2px] flex h-[29px] w-[102px] items-center justify-center border-[3px] border-[#0078d7] bg-[#e1e1e1] pt-0.5 pr-1"><Fit w={39}>Finish</Fit></div>
      <div className="ml-[26px] flex h-[29px] w-[102px] items-center justify-center border border-[#bfbfbf] bg-[#cccccc] pt-0.5 pr-0.5 text-[#8b8b8b]"><Fit w={46}>Cancel</Fit></div>
    </div>
  </div>
);

const RemoteToolbar = () => (
  <div className="flex h-[23px] w-[84px] border-b border-[#c5c5c5] bg-[#f0f0f0]">
    <svg viewBox="0 0 17 22" className="h-[22px] w-[17px] bg-[#cfcfcf]">
      {[1, 6.5, 12, 17.5].map((y) => [1.5, 6.5, 11.5].map((x) => <rect key={x + "-" + y} x={x} y={y} width="3.200" height="3.200" fill="#fff" />))}
    </svg>
    <svg viewBox="0 0 67 22" className="h-[22px] w-[67px]" fill="none" stroke="#777" strokeWidth="1.300">
      <path d="M5 5 L10 10 M10 6 V10 H6 M18 5 L13 10 M13 6 V10 H17 M5 18 L10 13 M6 13 H10 V17 M18 18 L13 13 M17 13 H13 V17" />
      <rect x="28" y="9.500" width="12" height="3" fill="#888" stroke="#666" />
      <path d="M46.500 6.500 L54.500 14 L62.500 6.500" stroke="#7a7a7a" strokeWidth="3" />
    </svg>
  </div>
);

export default function App() {
  return (
    <div className="relative h-[1084px] w-[1926px] overflow-hidden bg-white [font-family:'Open_Sans','Noto_Sans',sans-serif]">
      <div className="flex h-[1079px] w-[1920px]">
        <div className="relative flex-1 overflow-hidden border-l border-[#15252b] bg-black">
          <div className="-ml-[1.700px] grid auto-rows-[115.300px] grid-cols-[repeat(6,105.300px)] pt-[10px]">
            {items.map((it, i) => <DesktopIcon key={i} item={it} />)}
          </div>

          <div className="absolute top-0 left-[808px] flex h-px w-[301px]">
            <div className="w-[60px] bg-[#0a78d6]" />
            <div className="flex-1 bg-[#e2e6e4]" />
          </div>
          <div className="absolute top-0 left-[1216px]"><RemoteToolbar /></div>
          <div className="absolute top-[279px] left-[634px]"><SetupWindow /></div>

          <Fit w={409} className="absolute top-[857px] left-[1324px] text-[38px] leading-[52px] text-white">Nhấn finish để kết thúc</Fit>

          <svg viewBox="0 0 160 115" className="absolute top-[780px] left-[1154px] h-[115px] w-[160px]" fill="none" stroke="#ed1c24" strokeWidth="5" strokeLinecap="round">
            <path d="M5 5 L148 100 M134 69 L145 99 M109 106 L148 101" />
          </svg>

          <div className="absolute top-[934px] right-0 h-[76px] w-[35px]">
            <svg viewBox="0 0 35 76" className="absolute inset-0 h-full w-full">
              <path d="M35 .500 H6 Q.500 .500 .500 6 V48 Q.500 53 5 56 L35 74" fill="#4b4b4b" stroke="#686868" />
            </svg>
            <svg viewBox="0 0 28 28" className="absolute top-[9px] left-[6px] h-7 w-7">
              <rect width="28" height="28" fill="#16659c" />
              <circle cx="14" cy="14" r="12" fill="#828282" />
              <path d="M4 14 L10 9.500 V12.500 H18 V9.500 L24 14 L18 18.500 V15.500 H10 V18.500Z" fill="#1a639c" />
            </svg>
          </div>
        </div>
        <Taskbar />
      </div>
      <div className="flex h-[5px] items-start overflow-hidden pl-[231px] text-[15px] leading-[15px] text-[#333]">
        <Fit w={672} className="-mt-[5px]">npm is the standard package manager for Node.js. In December 2009 over 1.3 million</Fit>
      </div>
    </div>
  );
}
